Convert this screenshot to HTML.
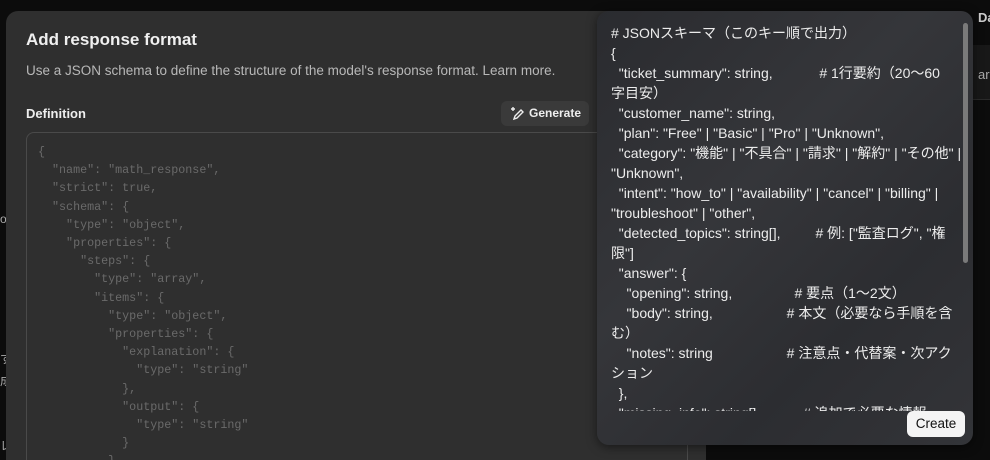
<!DOCTYPE html>
<html><head><meta charset="utf-8"><style>
*{margin:0;padding:0;box-sizing:border-box}
html,body{width:990px;height:460px;overflow:hidden}
body{background:#0c0c0c;font-family:"Liberation Sans","Noto Sans CJK JP",sans-serif;position:relative}
.right{position:absolute;left:705px;top:45px;width:285px;height:55px;background:#181818;border-bottom:1px solid #2a2a2a}
.modal{position:absolute;left:6px;top:11px;width:700px;height:449px;background:#2f2f2f;border-radius:12px 12px 0 0;overflow:hidden}
h1{position:absolute;left:20px;top:19px;font-size:17px;font-weight:bold;color:#f0f0f0}
.sub{position:absolute;left:20px;top:52px;font-size:13.5px;color:#b8b8b8}
.def{position:absolute;left:20px;top:95px;font-size:13px;font-weight:bold;color:#eee}
.gen{position:absolute;left:495px;top:90px;width:88px;height:25px;background:#3a3a3a;border-radius:6px;color:#eee;font-size:12px;font-weight:bold;padding:5px 0 0 28px}
.gen svg{position:absolute;left:9px;top:5px}
.ed{position:absolute;left:20px;top:121px;width:662px;height:328px;border:1px solid #4a4a4a;border-bottom:none;border-radius:8px 8px 0 0}
pre{position:absolute;left:38px;top:143px;height:317px;overflow:hidden;font-family:"Liberation Mono",monospace;font-size:11.7px;line-height:18.2px;color:#6a6a6a}
.pop{position:absolute;left:597px;top:11px;width:376px;height:434px;border-radius:12px;background:linear-gradient(135deg,#2a2b2f 0%,#35363a 40%,#2c2d31 70%,#333438 100%);box-shadow:0 2px 10px rgba(0,0,0,.5)}
.txt{position:absolute;left:14px;top:12px;font-size:14px;line-height:20px;color:#ececec;white-space:pre;height:388px;overflow:hidden}
.sb{position:absolute;left:366px;top:12px;width:5px;height:240px;background:#7a7a7a;border-radius:3px}
.create{position:absolute;left:310px;top:400px;width:58px;height:26px;background:#f4f4f4;border-radius:6px;color:#111;font-size:13.5px;text-align:center;line-height:26px}
.lt{position:absolute;left:0;color:#aaa;font-size:12px}
</style></head><body>
<div class="right"></div>
<div style="position:absolute;left:978px;top:10px;color:#ccc;font-size:13px;font-weight:bold">Da</div>
<div style="position:absolute;left:978px;top:67px;color:#aaa;font-size:13px">are</div>
<div class="lt" style="top:212px">o</div>
<div class="lt" style="top:350px">す</div>
<div class="lt" style="top:372px">成</div>
<div class="lt" style="top:437px">レ</div>
<div class="modal">
<h1>Add response format</h1>
<div class="sub">Use a JSON schema to define the structure of the model's response format. Learn more.</div>
<div class="def">Definition</div>
<div class="gen"><svg width="15" height="15" viewBox="0 0 15 15" fill="none" stroke="#eee" stroke-width="1.4"><path d="M4 13l1-3 6-6 2 2-6 6z M3 1v4 M1 3h4"/></svg>Generate</div>
<div class="ed"></div>
</div>
<pre>{
  "name": "math_response",
  "strict": true,
  "schema": {
    "type": "object",
    "properties": {
      "steps": {
        "type": "array",
        "items": {
          "type": "object",
          "properties": {
            "explanation": {
              "type": "string"
            },
            "output": {
              "type": "string"
            }
          }</pre>
<div class="pop">
<div class="txt"># JSONスキーマ（このキー順で出力）
{
  "ticket_summary": string,            # 1行要約（20〜60
字目安）
  "customer_name": string,
  "plan": "Free" | "Basic" | "Pro" | "Unknown",
  "category": "機能" | "不具合" | "請求" | "解約" | "その他" |
"Unknown",
  "intent": "how_to" | "availability" | "cancel" | "billing" |
"troubleshoot" | "other",
  "detected_topics": string[],         # 例: ["監査ログ", "権
限"]
  "answer": {
    "opening": string,                # 要点（1〜2文）
    "body": string,                   # 本文（必要なら手順を含
む）
    "notes": string                   # 注意点・代替案・次アク
ション
  },
  "missing_info": string[],           # 追加で必要な情報</div>
<div class="sb"></div>
<div class="create">Create</div>
</div>
</body></html>
